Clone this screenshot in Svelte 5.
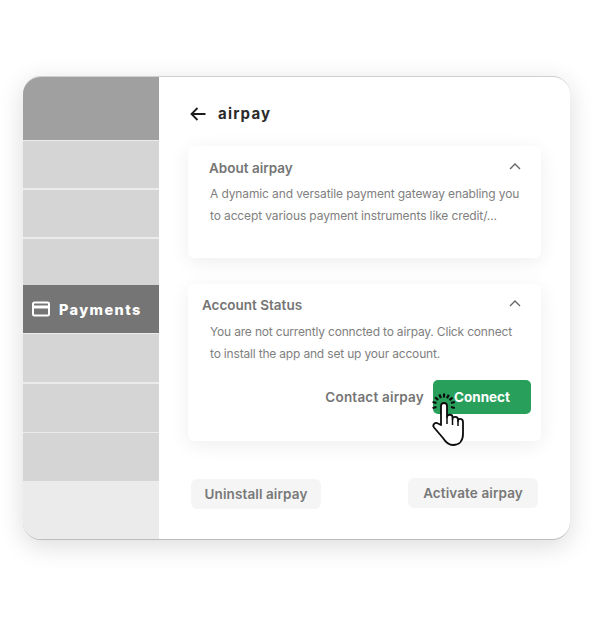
<script>
    const rows = [
        { h: 48, line: 1 },
        { h: 49, line: 2 },
        { h: 48, line: 2 },
        { h: 48, line: 0, label: 'Payments' },
        { h: 49, line: 1 },
        { h: 50, line: 2 },
        { h: 49, line: 1 }
    ]

    // dashes around the fingertip, skipping the part under the finger
    const rays = [165, 195, 222, 248, 272, 296, 320, 345, 15].map((deg) => {
        const a = (deg * Math.PI) / 180
        return {
            x1: 13.7 + 7.5 * Math.cos(a),
            y1: 15 + 7.5 * Math.sin(a),
            x2: 13.7 + 11.5 * Math.cos(a),
            y2: 15 + 11.5 * Math.sin(a)
        }
    })
</script>

<div class="page">
    <div class="window">
        <aside class="sidebar">
            <div class="side-head"></div>
            {#each rows as row}
                <div
                    class="side-row"
                    class:active={row.label}
                    style="height:{row.h}px;border-top-width:{row.line}px"
                >
                    {#if row.label}
                        <svg class="card-icon" width="18" height="16" viewBox="0 0 18 16" fill="none">
                            <rect x="1" y="1.5" width="16" height="13" rx="1.5" stroke="#fff" stroke-width="2" />
                            <rect x="1" y="4.5" width="16" height="3" fill="#fff" />
                        </svg>
                        <span>{row.label}</span>
                    {/if}
                </div>
            {/each}
        </aside>

        <main class="content">
            <div class="title-row">
                <svg width="16" height="14" viewBox="0 0 16 14" fill="none">
                    <path d="M15.5 7H1.5M7.5 1L1.5 7l6 6" stroke="#1c1c1c" stroke-width="1.8" />
                </svg>
                <h1>airpay</h1>
            </div>

            <section class="card about">
                <div class="card-head">
                    <h2>About airpay</h2>
                    <svg class="chev" width="12" height="7" viewBox="0 0 12 7" fill="none">
                        <path d="M1 6l5-5 5 5" stroke="#666" stroke-width="1.4" />
                    </svg>
                </div>
                <p>A dynamic and versatile payment gateway enabling you<br />to accept various payment instruments like credit/...</p>
            </section>

            <section class="card status">
                <div class="card-head">
                    <h2>Account Status</h2>
                    <svg class="chev" width="12" height="7" viewBox="0 0 12 7" fill="none">
                        <path d="M1 6l5-5 5 5" stroke="#666" stroke-width="1.4" />
                    </svg>
                </div>
                <p>You are not currently conncted to airpay. Click connect<br />to install the app and set up your account.</p>
                <div class="actions">
                    <span class="contact">Contact airpay</span>
                    <button class="connect">Connect</button>
                </div>
                <svg class="hand" width="40" height="60" viewBox="0 0 40 60" fill="none">
                    {#each rays as r}
                        <line x1={r.x1} y1={r.y1} x2={r.x2} y2={r.y2} stroke="#0c0c0c" stroke-width="2.2" />
                    {/each}
                    <path
                        d="M11 35V16c0-4 6-4 6 0v11c0-3 5.500-3 5.500 0v2c0-3 5.500-3 5.500 .5V31c0-3 5-3 5 1v12c0 7-4 11-10 11-5 0-7.500-3-10-7L4 37.500C2 35 5 31.500 8 33.500z"
                        fill="#fff"
                        stroke="#0c0c0c"
                        stroke-width="1.8"
                        stroke-linejoin="round"
                    />
                    <path d="M17 27v7M22.500 29v6M28 31v5" stroke="#0c0c0c" stroke-width="1.5" />
                </svg>
            </section>

            <div class="footer">
                <button class="soft uninstall">Uninstall airpay</button>
                <button class="soft">Activate airpay</button>
            </div>
        </main>
    </div>
</div>

<style>
    :global(body) {
        margin: 0;
        background: #fff;
    }
    .page {
        width: 592px;
        height: 624px;
        padding: 76px 22px 0 23px;
        box-sizing: border-box;
        font-family: Inter, "Liberation Sans", sans-serif;
    }
    .window {
        display: flex;
        height: 464px;
        background: #fff;
        border-radius: 18px;
        overflow: hidden;
        border-top: 1px solid #d0d0d0;
        border-bottom: 1px solid #bdbdbd;
        box-sizing: border-box;
        box-shadow: 0 6px 26px rgba(0, 0, 0, 0.14);
    }
    .sidebar {
        width: 136px;
        flex: none;
        background: #ebebeb;
    }
    .side-head {
        height: 63px;
        background: #a0a0a0;
    }
    .side-row {
        display: flex;
        align-items: center;
        box-sizing: border-box;
        background: #d5d5d5;
        border-top: 0 solid #ebebeb;
        background-clip: padding-box;
    }
    .side-row.active {
        background: #757575;
        color: #fff;
        padding-left: 9px;
        gap: 9px;
        font-size: 14.500px;
        font-weight: 800;
        letter-spacing: 1.4px;
    }
    .card-icon {
        flex: none;
    }
    .content {
        flex: 1;
        padding: 0 29px 0 29px;
        min-width: 0;
    }
    .title-row {
        display: flex;
        align-items: center;
        gap: 12px;
        height: 69px;
        padding: 4px 0 0 2px;
        box-sizing: border-box;
    }
    h1 {
        margin: 0;
        font-size: 15px;
        font-weight: 700;
        letter-spacing: 1.2px;
        color: #2a2a2a;
    }
    .card {
        position: relative;
        background: #fff;
        border-radius: 6px;
        box-shadow: 0 4px 20px rgba(0, 0, 0, 0.07);
        box-sizing: border-box;
    }
    .about {
        height: 112px;
        padding: 13px 20px 0 21px;
    }
    .status {
        height: 157px;
        margin-top: 26px;
        padding: 12px 20px 0 21px;
    }
    .card-head {
        display: flex;
        align-items: center;
        justify-content: space-between;
        height: 18px;
    }
    .status .card-head {
        margin-left: -7px;
    }
    h2 {
        margin: 0;
        font-size: 13.500px;
        font-weight: 600;
        color: #757575;
    }
    .chev {
        margin: -3px 0 0;
    }
    p {
        margin: 6px 0 0 1px;
        font-size: 12px;
        line-height: 22px;
        letter-spacing: -0.12px;
        color: #808080;
        white-space: nowrap;
    }
    .status p {
        margin-top: 7px;
        letter-spacing: -0.18px;
    }
    .actions {
        display: flex;
        justify-content: flex-end;
        align-items: center;
        gap: 9px;
        margin: 15px -10px 0 0;
    }
    .contact {
        font-size: 13.500px;
        font-weight: 600;
        letter-spacing: 0.2px;
        color: #757575;
    }
    .connect {
        width: 98px;
        height: 34px;
        border: 0;
        border-radius: 5px;
        background: #28a05c;
        color: #fff;
        font: 700 13.500px Inter, "Liberation Sans", sans-serif;
    }
    .hand {
        position: absolute;
        left: 242px;
        top: 106px;
    }
    .footer {
        display: flex;
        justify-content: space-between;
        align-items: flex-start;
        margin: 37px 3px 0 3px;
    }
    .soft {
        width: 130px;
        height: 30px;
        border: 0;
        border-radius: 6px;
        background: #f5f5f5;
        color: #787878;
        font: 600 13.500px Inter, "Liberation Sans", sans-serif;
        letter-spacing: 0.1px;
    }
    .uninstall {
        margin-top: 1px;
    }
</style>
